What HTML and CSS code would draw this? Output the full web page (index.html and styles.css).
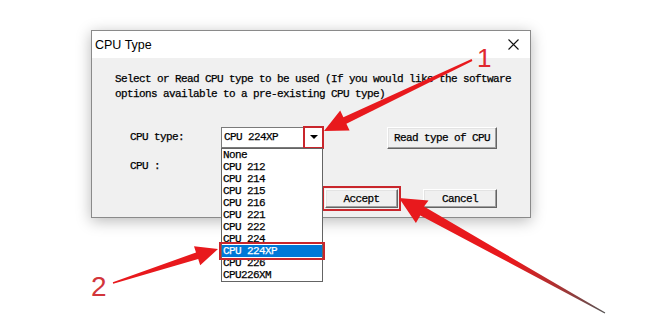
FILE: index.html
```html
<!DOCTYPE html>
<html lang="en">
<head>
    <meta charset="UTF-8">
    <title>CPU Type</title>
    <link rel="stylesheet" href="styles.css">
</head>
<body>

<section class="stage">

    <div class="dialog">
        <div class="titlebar">
            <span class="title">CPU Type</span>
            <svg class="close" width="11" height="11" viewBox="0 0 11 11">
                <path d="M0.5 0.5 L10.5 10.5 M10.5 0.5 L0.5 10.5" stroke="#111" stroke-width="1.1" fill="none"/>
            </svg>
        </div>

        <div class="content">
            <p class="intro">Select or Read CPU type to be used (If you would like the software<br>options available to a pre-existing CPU type)</p>

            <div class="row">
                <span class="label">CPU type:</span>
                <div class="combo">
                    <span class="value">CPU 224XP</span>
                    <span class="drop"><span class="tri"></span></span>
                    <ul class="droplist">
                        <li>None</li>
                        <li>CPU 212</li>
                        <li>CPU 214</li>
                        <li>CPU 215</li>
                        <li>CPU 216</li>
                        <li>CPU 221</li>
                        <li>CPU 222</li>
                        <li>CPU 224</li>
                        <li class="selected">CPU 224XP</li>
                        <li>CPU 226</li>
                        <li>CPU226XM</li>
                    </ul>
                </div>
                <button class="btn btn-read">Read type of CPU</button>
            </div>

            <div class="row row-cpu">
                <span class="label">CPU :</span>
            </div>

            <div class="actions">
                <button class="btn btn-accept">Accept</button>
                <button class="btn btn-cancel">Cancel</button>
            </div>
        </div>
    </div>

    <svg class="marks" width="665" height="321" viewBox="0 0 665 321">
        <defs>
            <linearGradient id="tail" x1="605" y1="313" x2="420" y2="210" gradientUnits="userSpaceOnUse">
                <stop offset="0" stop-color="#555"/>
                <stop offset="0.25" stop-color="#a33"/>
                <stop offset="0.5" stop-color="#e8191d"/>
                <stop offset="1" stop-color="#e8191d"/>
            </linearGradient>
        </defs>
        <!-- arrow 1 -->
        <polygon fill="#e8191d" points="471.6,59.1 472.4,60.9 346.4,123.7 349.6,130.4 324,131 340.2,110.6 343.4,117.3"/>
        <!-- arrow 2 -->
        <polygon fill="#e8191d" points="112.8,282.2 113.2,283.8 198.2,259.1 200.2,265.3 218,249 194,246.3 196,252.5"/>
        <!-- arrow 3 -->
        <polygon fill="url(#tail)" points="605.3,312.6 604.7,313.4 420.3,215.5 415.9,223 399,198 428.5,200.5 424,206.5"/>
        <text class="num num-1" x="477" y="67">1</text>
        <text class="num num-2" x="91" y="296">2</text>
    </svg>

</section>

</body>
</html>
```

FILE: styles.css
```css
body {
    margin: 0;
    background-color: #fff;
    font-family: "Liberation Mono", monospace;
}

.stage {
    position: relative;
    width: 665px;
    height: 321px;
    overflow: hidden;
    padding-top: 30px;
    box-sizing: border-box;
}

.dialog {
    margin-left: 91px;
    width: 440px;
    height: 188px;
    box-sizing: border-box;
    border: 1px solid #8a8a8a;
    background-color: #f0f0f0;
    box-shadow: 0 3px 14px rgba(0, 0, 0, .28);
    display: flex;
    flex-direction: column;
}

.titlebar {
    height: 27px;
    background-color: #fff;
    display: flex;
    align-items: center;
    padding: 0 11px 0 3px;
}

.titlebar .title {
    font-family: "Liberation Sans", sans-serif;
    font-size: 12.5px;
    color: #000;
}

.titlebar .close {
    margin-left: auto;
}

.content {
    padding: 14px 33px 0 23px;
    font-size: 11px;
    letter-spacing: -.6px;
    color: #000;
    -webkit-text-stroke: .25px #000;
}

.intro {
    margin: 0;
    line-height: 15px;
    white-space: nowrap;
}

.row {
    display: flex;
    align-items: center;
    padding-left: 15px;
}

.row:first-of-type {
    margin-top: 24px;
    height: 22px;
}

.label {
    width: 91px;
}

.combo {
    position: relative;
    width: 102px;
    height: 21px;
    box-sizing: border-box;
    border: 1px solid #7a7a7a;
    background-color: #fff;
    display: flex;
    align-items: center;
}

.combo .value {
    padding-left: 2px;
}

.combo .drop {
    margin-left: auto;
    width: 17px;
    height: 19px;
    display: flex;
    align-items: center;
    justify-content: center;
    outline: 2px solid #c9262c;
    outline-offset: 0;
}

.combo .tri {
    width: 0;
    height: 0;
    border-left: 4px solid transparent;
    border-right: 4px solid transparent;
    border-top: 4px solid #000;
}

.droplist {
    position: absolute;
    top: 20px;
    left: -1px;
    width: 102px;
    margin: 0;
    padding: 0;
    list-style: none;
    box-sizing: border-box;
    border: 1px solid #646464;
    background-color: #fff;
    z-index: 2;
}

.droplist li {
    height: 12px;
    line-height: 12px;
    padding-left: 1px;
}

.droplist li.selected {
    background-color: #0078d7;
    color: #fff;
    -webkit-text-stroke: .25px #fff;
    outline: 2px solid #c9262c;
    outline-offset: 1px;
}

.btn {
    font-family: inherit;
    font-size: 11px;
    letter-spacing: -.6px;
    color: #000;
    -webkit-text-stroke: .25px #000;
    background-color: #f0f0f0;
    border: 1px solid;
    border-color: #fff #646464 #646464 #fff;
    box-shadow: inset -1px -1px 0 #a0a0a0, inset 1px 1px 0 #e3e3e3;
    padding: 0;
    height: 21px;
}

.btn-read {
    margin-left: auto;
    width: 110px;
    height: 22px;
    margin-top: 2px;
}

.row-cpu {
    margin-top: 11px;
    height: 14px;
}

.actions {
    display: flex;
    justify-content: flex-end;
    gap: 25px;
    margin-top: 16px;
}

.btn-accept {
    width: 73px;
    height: 19px;
    outline: 2px solid #c9262c;
    outline-offset: 1px;
}

.btn-cancel {
    width: 74px;
    height: 19px;
}

.marks {
    position: absolute;
    top: 0;
    left: 0;
    pointer-events: none;
}

.num {
    font-family: "Liberation Sans", sans-serif;
    fill: #e0282e;
}

.num-1 {
    font-size: 26px;
}

.num-2 {
    font-size: 28px;
    fill: #d2353b;
}
```
